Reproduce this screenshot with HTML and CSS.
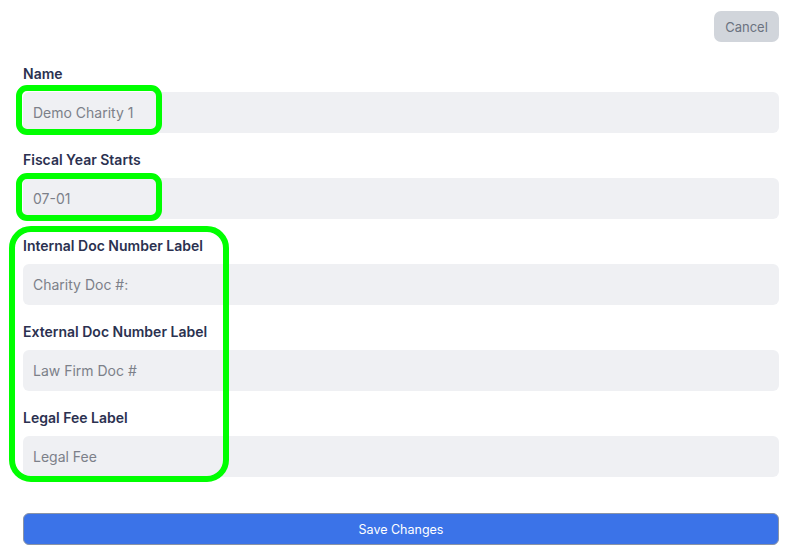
FILE: index.html
```html
<!DOCTYPE html>
<html lang="en">
<head>
  <meta charset="UTF-8">
  <meta name="viewport" content="width=device-width, initial-scale=1.0">
  <title>Charity Settings</title>
  <link rel="stylesheet" href="styles.css">
</head>
<body>
  <div class="page">
    <div class="toolbar">
      <button class="btn-cancel" type="button">Cancel</button>
    </div>

    <form class="settings">
      <div class="field">
        <label for="name">Name</label>
        <input id="name" type="text" placeholder="Demo Charity 1">
      </div>
      <div class="field">
        <label for="fiscal">Fiscal Year Starts</label>
        <input id="fiscal" type="text" placeholder="07-01">
      </div>
      <div class="field">
        <label for="internal">Internal Doc Number Label</label>
        <input id="internal" type="text" placeholder="Charity Doc #:">
      </div>
      <div class="field">
        <label for="external">External Doc Number Label</label>
        <input id="external" type="text" placeholder="Law Firm Doc #">
      </div>
      <div class="field">
        <label for="fee">Legal Fee Label</label>
        <input id="fee" type="text" placeholder="Legal Fee">
      </div>

      <button class="btn-save" type="submit">Save Changes</button>
    </form>

    <!-- highlight marks -->
    <div class="mark mark-name"></div>
    <div class="mark mark-fiscal"></div>
    <div class="mark mark-labels"></div>
  </div>
</body>
</html>
```

FILE: styles.css
```css
body {
  margin: 0;
  font-family: Inter, "Noto Sans", sans-serif;
  background: #fff;
}
.page {
  position: relative;
  padding: 11px 9px 0 23px;
}
.toolbar {
  display: flex;
  justify-content: flex-end;
  margin-bottom: 22px;
}
.btn-cancel {
  width: 65px;
  height: 31px;
  border: none;
  border-radius: 7px;
  background: #d1d5db;
  color: #6b7280;
  font-family: inherit;
  font-size: 13px;
}
.settings {
  display: flex;
  flex-direction: column;
}
.field {
  display: flex;
  flex-direction: column;
  margin-bottom: 17px;
}
.field label {
  font-size: 14px;
  font-weight: 600;
  line-height: 20px;
  color: #2b3150;
  margin-bottom: 8px;
}
.field input {
  height: 41px;
  box-sizing: border-box;
  border: none;
  border-radius: 6px;
  background: #eff0f3;
  padding: 0 10px;
  font-family: inherit;
  font-size: 14px;
  color: #374151;
}
.field input::placeholder {
  color: #7c8089;
}
.btn-save {
  margin-top: 19px;
  height: 32px;
  border: 1px solid #8a94a6;
  border-radius: 6px;
  background: #3b73e8;
  color: #fff;
  font-family: inherit;
  font-size: 12.5px;
}
.mark {
  position: absolute;
  box-sizing: border-box;
  border: 6px solid #00ff00;
  pointer-events: none;
}
.mark-name {
  left: 16px;
  top: 85px;
  width: 146px;
  height: 50px;
  border-radius: 11px;
}
.mark-fiscal {
  left: 16px;
  top: 173px;
  width: 146px;
  height: 48px;
  border-radius: 11px;
}
.mark-labels {
  left: 9px;
  top: 226px;
  width: 220px;
  height: 256px;
  border-radius: 22px;
}
```
